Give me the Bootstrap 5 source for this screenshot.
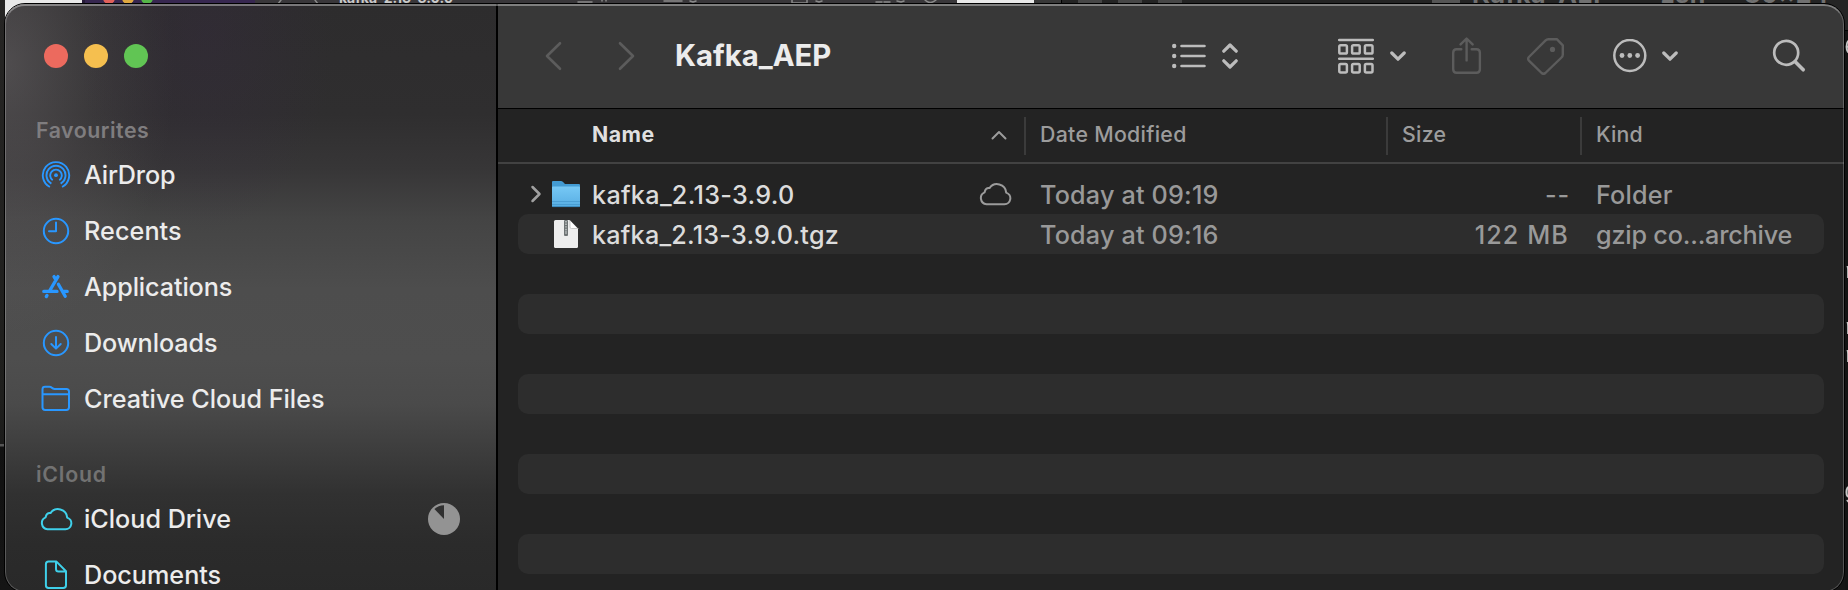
<!DOCTYPE html>
<html lang="en" data-bs-theme="dark">
<head>
<meta charset="utf-8">
<title>Kafka_AEP</title>
<link href="https://cdn.jsdelivr.net/npm/bootstrap@5.3.0/dist/css/bootstrap.min.css" rel="stylesheet">
<style>
  html, body { height: 590px; overflow: hidden; }
  body { font-family: Inter, "Liberation Sans", sans-serif; background: #151515; color: #dfdfdf; line-height: 1; white-space: nowrap; }
  svg { display: block; flex: none; }

  /* windows behind the Finder window */
  .desk-top { position: absolute; inset: 0 0 auto 0; height: 30px; overflow: hidden; background: #242424; }
  .desk-top .pane { height: 30px; flex: none; }
  .peek { position: absolute; top: -12px; font-size: 19px; font-weight: 700; line-height: 20px; }
  .dotlet { position: absolute; top: -8px; width: 12px; height: 12px; border-radius: 50%; }
  .desk-right { position: absolute; left: 1845px; top: 30px; width: 3px; height: 560px; overflow: hidden; background: #131313; border-top: 1px solid #000; }
  .desk-right span { position: absolute; left: -1px; font: 22px/24px "Liberation Mono", monospace; color: #c8c8c8; will-change: transform; }
  .desk-left { position: absolute; left: 0; top: 0; width: 5px; height: 590px; background: linear-gradient(#262524 0, #1f1f1d 400px, #1c1c1b 444px, #555 444px, #555 446px, #111 447px, #151515 590px); }

  .finder { position: relative; margin: 3px 0 0 4px; width: 1841px; height: 590px; border: 1px solid #000; border-radius: 21px; overflow: hidden; }
  .finder::after { content: ""; position: absolute; inset: 0; border: 1.5px solid rgba(255,255,255,.22); border-top: 2px solid rgba(255,255,255,.36); border-radius: 20px; pointer-events: none; }

  .side { width: 493px; padding-top: 1px; border-right: 2px solid #000; flex: none;
    background:
      radial-gradient(ellipse 130px 200px at 200px 30px, rgba(56,42,68,.3), transparent),
      radial-gradient(ellipse 170px 270px at 0 60px, rgba(125,120,123,.42), rgba(120,112,118,.16) 55%, transparent),
      linear-gradient(#2d2c2d 0, #2f2e2f 110px, #373637 165px, #444444 215px, #4d4d4d 285px, #4e4e4e 355px, #4a4a4a 400px, #3f3f3f 440px, #313131 490px, #2b2b2b 540px, #292929 589px); }
  .side > * { flex: none; }
  .lights { padding: 39px 0 0 39px; gap: 16px; height: 102px; }
  .light { width: 24px; height: 24px; border-radius: 50%; }
  .side-head { height: 40px; padding: 9px 0 0 31px; font-size: 21.3px; font-weight: 600; letter-spacing: .53px; color: #7f7d7f; line-height: 28px; }
  .side-item { height: 56px; padding: 1px 0 0 34px; font-size: 25.2px; font-weight: 500; color: #ececec; letter-spacing: -.02px; }
  .side-item svg { margin-top: -2px; }
  .side-item .ico { width: 34px; margin-right: 11px; display: flex; justify-content: center; }
  .blue { color: #2997ff; } .cyan { color: #3fd0ea; }

  .main { background: #232323; }
  .tools { height: 105px; background: #383838; border-bottom: 1px solid #000; color: #bcbcbc; }
  .off { color: #5c5c5c; }
  .win-title { font-size: 29.3px; font-weight: 700; color: #ececec; margin-left: 40px; }
  .heads { height: 55px; border-bottom: 2px solid #424242; font-size: 21.3px; font-weight: 500; color: #9c9c9c; padding-left: 20px; }
  .heads, .file { display: grid; grid-template-columns: 506px 362px 194px 1fr; align-items: center; }
  .heads > div + div { border-left: 2px solid #3b3b3b; height: 38px; padding: 0 0 2px 14px; display: flex; align-items: center; }
  .files { padding: 10px 20px 0 20px; }
  .file { height: 40px; border-radius: 10px; font-size: 25.2px; font-weight: 500; letter-spacing: .18px; color: #999; }
  .file > div { padding-top: 3px; }
  .file svg { margin-top: -3px; }
  .file:nth-child(even) { background: #2d2d2d; }
  .file-name { color: #dcdcdc; }
  .stroke { fill: none; stroke: currentColor; stroke-linecap: round; stroke-linejoin: round; }
</style>
</head>
<body>
<div class="desk-top d-flex">
  <div class="pane" style="width:82px;background:#e9e9e9"></div>
  <div class="pane" style="width:3px;background:#271b38"></div>
  <div class="pane" style="width:170px;background:#372750"></div>
  <div class="pane" style="width:702px;background:#39373a"></div>
  <div class="pane" style="width:77px;background:#e9e9e9"></div>
  <div class="pane" style="width:27px;background:#383838"></div>
  <div class="pane" style="width:1px;background:#000"></div>
  <div class="dotlet" style="left:103px;background:#e0605a"></div>
  <div class="dotlet" style="left:122px;background:#dfa840"></div>
  <div class="dotlet" style="left:141px;background:#55b548"></div>
  <div class="peek" style="left:339px;color:#c9c9c9;font-size:14px">kafka_2.13-3.9.0</div>
  <svg class="position-absolute top-0 start-0 stroke" style="color:#8a8a8a" width="960" height="3" stroke-width="1.5"><path d="M281 0l-3 4M315 0l3 4M578 2h14M602 0v1M606 0v1M664 1h18M690 1l3 1 3-1M792 0v3h15v-3M816 1l3 1 3-1M876 2h6M884 2h6M897 1l4 1 3-1M925 0q5 5 11 0"/></svg>
  <svg class="position-absolute top-0" style="left:1078px" width="110" height="4" fill="#464646"><path d="M0 0h24v4H0zM40 0h24v4H40zM80 0h24v4H80z"/></svg>
  <div class="position-absolute top-0" style="left:1432px;width:28px;height:3px;background:#555"></div>
  <div class="peek" style="left:1472px;top:-16px;color:#707070;font-size:25px;letter-spacing:.5px">Kafka_AEP — -zsh — 80×24</div>
</div>
<div class="desk-left"></div>
<div class="desk-right">
  <span style="top:6px">6</span><span style="top:230px">r</span><span style="top:286px">r</span><span style="top:314px">r</span><span style="top:450px">g</span>
</div>

<div class="finder d-flex">
  <aside class="side d-flex flex-column">
    <div class="lights d-flex">
      <span class="light" style="background:#ec6a5e"></span>
      <span class="light" style="background:#f5bf4f"></span>
      <span class="light" style="background:#61c554"></span>
    </div>
    <div class="side-head">Favourites</div>
    <nav class="d-flex flex-column">
      <div class="side-item d-flex align-items-center"><span class="ico blue"><svg class="stroke" width="30" height="30" viewBox="0 0 30 30" stroke-width="1.9"><circle cx="15" cy="15.2" r="1.9" fill="currentColor" stroke="none"/><path stroke-linecap="butt" d="M8.9 27A13.2 13.2 0 1 1 21.1 27M10.4 23.6A9.5 9.5 0 1 1 19.6 23.6M11.7 20.2A5.8 5.8 0 1 1 18.3 20.2"/></svg></span><span style="letter-spacing:-.2px">AirDrop</span></div>
      <div class="side-item d-flex align-items-center"><span class="ico blue"><svg class="stroke" width="30" height="30" viewBox="0 0 30 30" stroke-width="2"><circle cx="15" cy="15" r="12.2"/><path d="M15 6.5V15.3H8"/></svg></span><span style="letter-spacing:.07px">Recents</span></div>
      <div class="side-item d-flex align-items-center"><span class="ico blue"><svg class="stroke" width="30" height="30" viewBox="0 0 30 30" stroke-width="3.3"><path d="M17 4.6L8.5 19M13 4.6L14.8 7.6M2.8 19.4H16M21.6 19.4H26.2M17.4 12.2L24.2 24.2M6 23.4L5.3 24.6"/></svg></span><span style="letter-spacing:-.12px">Applications</span></div>
      <div class="side-item d-flex align-items-center"><span class="ico blue"><svg class="stroke" width="30" height="30" viewBox="0 0 30 30" stroke-width="2"><circle cx="15" cy="15" r="12.2"/><path d="M15 9V20.3M10.3 16L15 20.6L19.7 16"/></svg></span><span style="letter-spacing:-.09px">Downloads</span></div>
      <div class="side-item d-flex align-items-center"><span class="ico blue"><svg class="stroke" width="30" height="28" viewBox="0 0 30 28" stroke-width="2"><path d="M1.5 23V4.2Q1.5 1.8 4 1.8H8.5Q9.8 1.8 10.8 2.8T13.5 4H25.3Q28 4 28 6.6V22.3Q28 25 25.3 25H4.2Q1.5 25 1.5 22.3M1.5 9.3H28"/></svg></span>Creative Cloud Files</div>
    </nav>
    <div class="side-head" style="height:64px;padding-top:33px;letter-spacing:.8px;color:#727272">iCloud</div>
    <nav class="d-flex flex-column">
      <div class="side-item d-flex align-items-center"><span class="ico cyan"><svg class="stroke" width="34" height="24" viewBox="0 0 34 24" stroke-width="2"><path d="M8.5 22.3H26.5A6 6 0 0 0 28.2 10.6A9.2 9.2 0 0 0 11.5 6.1Q7.6 5.6 6.6 10.3A6.3 6.3 0 0 0 8.5 22.3Z"/></svg></span>iCloud Drive
        <svg class="ms-auto" style="margin-right:36px" width="32" height="32" viewBox="0 0 32 32"><circle cx="16" cy="16" r="16" fill="#939393"/><path d="M16 16V2.2A13.8 13.8 0 0 0 6.4 6Z" fill="#303030"/></svg>
      </div>
      <div class="side-item d-flex align-items-center"><span class="ico cyan"><svg class="stroke" width="24" height="30" viewBox="0 0 24 30" stroke-width="2"><path d="M4.6 1.6H12.5L22 11.3V25.2Q22 28 19.2 28H4.6Q1.9 28 1.9 25.2V4.3Q1.9 1.6 4.6 1.6ZM12 2V9Q12 11.6 14.5 11.6H21.8"/></svg></span>Documents</div>
    </nav>
  </aside>

  <main class="main flex-grow-1">
    <div class="tools d-flex align-items-center">
      <svg class="stroke off" style="margin-left:47px" width="18" height="30" viewBox="0 0 18 30" stroke-width="2.6"><path d="M15 2.2L2 15L15 27.8"/></svg>
      <svg class="stroke off" style="margin-left:54px" width="18" height="30" viewBox="0 0 18 30" stroke-width="2.6"><path d="M3 2.2L16 15L3 27.8"/></svg>
      <div class="win-title">Kafka_AEP</div>
      <svg class="stroke ms-auto" width="34" height="26" viewBox="0 0 34 26" stroke-width="2.6"><g fill="currentColor" stroke="none"><circle cx="2.2" cy="3" r="2.2"/><circle cx="2.2" cy="13" r="2.2"/><circle cx="2.2" cy="23" r="2.2"/></g><path d="M9.5 3H32.5M9.5 13H32.5M9.5 23H32.5"/></svg>
      <svg class="stroke" style="margin-left:16px" width="16" height="26" viewBox="0 0 16 26" stroke-width="3.2"><path d="M1.8 8.2L8 2L14.2 8.2M1.8 17.8L8 24L14.2 17.8"/></svg>
      <svg class="stroke" style="margin-left:100px" width="36" height="36" viewBox="0 0 36 36" stroke-width="2.5"><path d="M1.2 2H34.8M1.2 20.8H34.8"/><rect x="1.3" y="7.2" width="7.6" height="8.4" rx="1.4"/><rect x="14.1" y="7.2" width="7.6" height="8.4" rx="1.4"/><rect x="26.9" y="7.2" width="7.6" height="8.4" rx="1.4"/><rect x="1.3" y="26" width="7.6" height="8.4" rx="1.4"/><rect x="14.1" y="26" width="7.6" height="8.4" rx="1.4"/><rect x="26.9" y="26" width="7.6" height="8.4" rx="1.4"/></svg>
      <svg class="stroke" style="margin-left:16px" width="16" height="12" viewBox="0 0 16 12" stroke-width="3.2"><path d="M1.8 3L8 9.2L14.2 3"/></svg>
      <svg class="stroke off" style="margin-left:46px" width="30" height="38" viewBox="0 0 30 38" stroke-width="2.4"><path d="M9.3 12.3H4.6Q1.2 12.3 1.2 15.8V32.3Q1.2 35.8 4.6 35.8H24.4Q27.9 35.8 27.9 32.3V15.8Q27.9 12.3 24.4 12.3H19.7M14.6 23.4V1.6M8.6 7.4L14.6 1.5L20.6 7.4"/></svg>
      <svg class="stroke off" style="margin-left:45px" width="38" height="38" viewBox="0 0 38 38" stroke-width="2.4"><path d="M21.3 2.2H29.8L35.8 8.4V17.5Q35.8 19.2 34.5 20.5L18.4 36Q16.5 37.6 14.6 36L1.9 23.6Q.4 21.8 1.9 20L18.6 3.4Q19.8 2.2 21.3 2.2Z"/><circle cx="25.5" cy="12.4" r="2.6" fill="currentColor" stroke="none"/></svg>
      <svg class="stroke" style="margin-left:48px" width="34" height="34" viewBox="0 0 34 34" stroke-width="2.5"><circle cx="16.8" cy="16.5" r="15.5"/><g fill="currentColor" stroke="none"><circle cx="9" cy="16.5" r="2.4"/><circle cx="16.8" cy="16.5" r="2.4"/><circle cx="24.6" cy="16.5" r="2.4"/></g></svg>
      <svg class="stroke" style="margin-left:15px" width="16" height="12" viewBox="0 0 16 12" stroke-width="3.2"><path d="M1.8 3L8 9.2L14.2 3"/></svg>
      <svg class="stroke" style="margin:0 38px 0 94px" width="34" height="34" viewBox="0 0 34 34" stroke-width="2.7"><circle cx="14.2" cy="13.8" r="12"/><path stroke-width="3.6" d="M23.2 22.8L31.2 30.8"/></svg>
    </div>

    <div class="heads">
      <div class="d-flex align-items-center" style="padding:0 0 2px 74px;color:#dfdfdf;font-weight:700;letter-spacing:.5px">Name
        <svg class="stroke ms-auto" style="margin:2px 17px 0 0;color:#9c9c9c" width="16" height="10" viewBox="0 0 16 10" stroke-width="2"><path d="M1.5 8.5L8 2L14.5 8.5"/></svg></div>
      <div style="letter-spacing:.3px">Date Modified</div>
      <div style="letter-spacing:.27px">Size</div>
      <div style="letter-spacing:.14px">Kind</div>
    </div>

    <div class="files">
      <div class="file">
        <div class="d-flex align-items-center file-name">
          <svg class="stroke" style="margin-left:12px;color:#a0a0a0" width="12" height="18" viewBox="0 0 12 18" stroke-width="2.5"><path d="M2.5 2L9.5 9L2.5 16"/></svg>
          <svg style="margin-left:10px;margin-right:12px" width="28" height="28" viewBox="0 0 28 28">
            <defs><linearGradient id="fold" x2="0" y2="1"><stop offset="0" stop-color="#77c8f5"/><stop offset="1" stop-color="#57aee3"/></linearGradient></defs>
            <path d="M0 2Q0 1 1 1H9Q10 1 10.8 1.8L13 4H27Q28 4 28 5V12H0Z" fill="#439bd3"/>
            <path d="M0 7Q0 6.5 1 6.5H27Q28 6.5 28 7.3V26Q28 27 27 27H1Q0 27 0 26Z" fill="url(#fold)"/>
            <path d="M0 21.5H28M0 24.5H28" stroke="#4699ce" stroke-width=".8"/><path d="M.5 26.6H27.5" stroke="#3b88bb"/>
          </svg>
          <span style="letter-spacing:.31px">kafka_2.13-3.9.0</span>
          <svg class="stroke ms-auto" style="margin-right:12px;color:#9b9b9b" width="34" height="24" viewBox="0 0 34 24" stroke-width="2"><path d="M8.5 22.3H26.5A6 6 0 0 0 28.2 10.6A9.2 9.2 0 0 0 11.5 6.1Q7.6 5.6 6.6 10.3A6.3 6.3 0 0 0 8.5 22.3Z"/></svg>
        </div>
        <div style="padding-left:16px">Today at 09:19</div>
        <div class="text-end" style="padding-right:10px;letter-spacing:.85px">--</div>
        <div style="padding-left:16px">Folder</div>
      </div>
      <div class="file">
        <div class="d-flex align-items-center file-name">
          <svg style="margin-left:34px;margin-right:12px" width="28" height="30" viewBox="0 0 28 30">
            <path d="M3.5 1H17.5L26 9.5V27.5Q26 29 24.5 29H3.5Q2 29 2 27.5V2.5Q2 1 3.5 1Z" fill="#ededed"/>
            <path d="M18 1L26 9.5H19.5Q18 9.5 18 8Z" fill="#fff" stroke="#bdbdbd" stroke-width=".8"/>
            <path d="M17.8 1H26V9.2Z" fill="#2d2d2d"/>
            <rect x="12" y="1" width="4" height="16" rx="1" fill="#6e7374"/><path d="M14 2V11" stroke="#c8cccc" stroke-width="1.4" stroke-dasharray="1.4 1.2"/><path d="M14 11.5V15" stroke="#b9bdbd" stroke-width="1.3"/>
          </svg>
          <span style="letter-spacing:.22px">kafka_2.13-3.9.0.tgz</span>
        </div>
        <div style="padding-left:16px">Today at 09:16</div>
        <div class="text-end" style="padding-right:11px;letter-spacing:1.1px">122 MB</div>
        <div style="padding-left:16px;letter-spacing:-.19px">gzip co...archive</div>
      </div>
      <div class="file"></div><div class="file"></div><div class="file"></div><div class="file"></div>
      <div class="file"></div><div class="file"></div><div class="file"></div><div class="file"></div>
    </div>
  </main>
</div>
<script src="https://cdn.jsdelivr.net/npm/bootstrap@5.3.0/dist/js/bootstrap.bundle.min.js"></script>
</body>
</html>
